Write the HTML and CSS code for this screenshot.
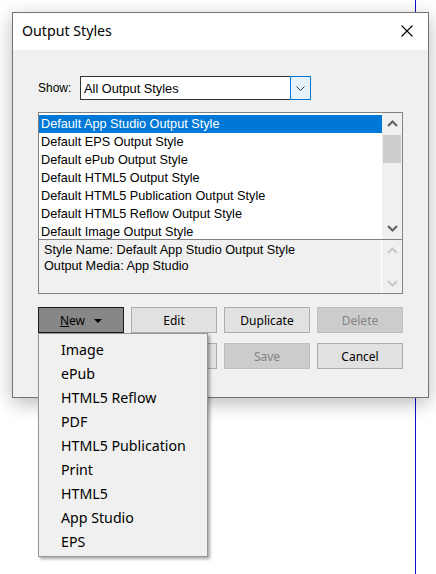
FILE: index.html
```html
<!DOCTYPE html>
<html lang="en">
<head>
    <meta charset="UTF-8">
    <meta name="viewport" content="width=device-width, initial-scale=1.0">
    <title>Output Styles</title>
    <link rel="stylesheet" href="styles.css">
</head>
<body>
    <div class="dialog">
        <div class="titlebar">
            <span class="title">Output Styles</span>
            <svg class="close" width="12" height="12" viewBox="0 0 12 12">
                <path d="M0.5 0.5 L11.5 11.5 M11.5 0.5 L0.5 11.5" stroke="#000" stroke-width="1.1" fill="none"/>
            </svg>
        </div>

        <div class="dialog-body">
            <div class="show-row">
                <span class="show-label">Show:</span>
                <div class="combo">
                    <span class="combo-value">All Output Styles</span>
                    <span class="combo-btn">
                        <svg width="9" height="5" viewBox="0 0 9 5"><polyline points="0.5,0.5 4.5,4.5 8.5,0.5" fill="none" stroke="#333" stroke-width="1"/></svg>
                    </span>
                </div>
            </div>

            <div class="style-box">
                <div class="style-list">
                    <ul class="items">
                        <li class="selected">Default App Studio Output Style</li>
                        <li>Default EPS Output Style</li>
                        <li>Default ePub Output Style</li>
                        <li>Default HTML5 Output Style</li>
                        <li>Default HTML5 Publication Output Style</li>
                        <li>Default HTML5 Reflow Output Style</li>
                        <li>Default Image Output Style</li>
                    </ul>
                    <div class="vscroll">
                        <span class="arrow">
                            <svg width="11" height="7" viewBox="0 0 11 7"><polyline points="1,6 5.5,1.5 10,6" fill="none" stroke="#606060" stroke-width="2"/></svg>
                        </span>
                        <span class="track"><span class="thumb"></span></span>
                        <span class="arrow">
                            <svg width="11" height="7" viewBox="0 0 11 7"><polyline points="1,1 5.5,5.5 10,1" fill="none" stroke="#606060" stroke-width="2"/></svg>
                        </span>
                    </div>
                </div>
                <div class="style-info">
                    <div class="info-text">
                        <p>Style Name: Default App Studio Output Style</p>
                        <p>Output Media: App Studio</p>
                    </div>
                    <div class="vscroll off">
                        <span class="arrow">
                            <svg width="11" height="7" viewBox="0 0 11 7"><polyline points="1,6 5.5,1.5 10,6" fill="none" stroke="#c8c8c8" stroke-width="2"/></svg>
                        </span>
                        <span class="track"></span>
                        <span class="arrow">
                            <svg width="11" height="7" viewBox="0 0 11 7"><polyline points="1,1 5.5,5.5 10,1" fill="none" stroke="#c8c8c8" stroke-width="2"/></svg>
                        </span>
                    </div>
                </div>
            </div>

            <div class="buttons">
                <div class="new-wrap">
                    <button class="btn btn-new"><u>N</u>ew <span class="caret"></span></button>
                    <ul class="menu">
                        <li>Image</li>
                        <li>ePub</li>
                        <li>HTML5 Reflow</li>
                        <li>PDF</li>
                        <li>HTML5 Publication</li>
                        <li>Print</li>
                        <li>HTML5</li>
                        <li>App Studio</li>
                        <li>EPS</li>
                    </ul>
                </div>
                <button class="btn">Edit</button>
                <button class="btn">Duplicate</button>
                <button class="btn" disabled>Delete</button>
                <!-- these two sit under the open menu -->
                <button class="btn"></button>
                <button class="btn"></button>
                <button class="btn" disabled>Save</button>
                <button class="btn">Cancel</button>
            </div>
        </div>
    </div>
</body>
</html>
```

FILE: styles.css
```css
/* Page behind the dialog, with the blue guide line */
body {
    margin: 0;
    min-height: 574px;
    background: #fff linear-gradient(#1010c8, #1010c8) no-repeat 415px 0 / 1px 100%;
    font-family: "Liberation Sans", Arial, sans-serif;
    color: #000;
}

.dialog {
    width: 415px;
    margin: 12px 0 0 12px;
    border: 1px solid #737373;
    background: #f0f0f0;
    box-shadow: 0 5px 18px rgba(0, 0, 0, 0.28);
}

.titlebar {
    height: 37px;
    background: #fff;
    display: flex;
    align-items: center;
    justify-content: space-between;
    padding: 0 15px 0 9px;
}

.title {
    font-family: "Noto Sans", sans-serif;
    font-size: 14.2px;
    margin-top: -2px;
}

.close {
    margin-top: -1px;
}

.dialog-body {
    padding: 26px 25px 28px 25px;
}

/* Show: combo */
.show-row {
    display: flex;
    align-items: center;
}

.show-label {
    font-size: 12px;
    width: 42px;
}

.combo {
    width: 229px;
    height: 22px;
    border: 1px solid #333;
    background: #fff;
    display: flex;
    align-items: center;
}

.combo-value {
    flex: 1;
    padding-left: 3px;
    font-size: 12.8px;
}

.combo-btn {
    width: 19px;
    height: 22px;
    margin-right: -1px;
    border: 1px solid #0078d7;
    background: #e5f1fb;
    display: flex;
    align-items: center;
    justify-content: center;
}

/* List of styles and the info panel below it */
.style-box {
    margin-top: 12px;
    width: 363px;
    border: 1px solid #828282;
}

.style-list {
    display: flex;
    height: 126px;
    background: #fff;
    border-bottom: 1px solid #828282;
}

.items {
    list-style: none;
    margin: 0;
    padding: 2px 0 0 0;
    flex: 1;
    overflow: hidden;
    font-size: 12.7px;
}

.items li {
    height: 18px;
    line-height: 18px;
    padding-left: 2px;
    white-space: nowrap;
}

.items li.selected {
    background: #0078d7;
    color: #fff;
}

.vscroll {
    width: 20px;
    background: #f0f0f0;
    display: flex;
    flex-direction: column;
}

.vscroll .arrow {
    height: 21px;
    display: flex;
    align-items: center;
    justify-content: center;
}

.vscroll .track {
    flex: 1;
    padding: 1px 1px 0 1px;
}

.thumb {
    display: block;
    height: 28px;
    background: #cdcdcd;
}

.style-info {
    display: flex;
    height: 53px;
}

.info-text {
    flex: 1;
    padding: 2px 0 0 5px;
    font-size: 12.7px;
    line-height: 16px;
}

.info-text p {
    margin: 0;
    white-space: nowrap;
}

.vscroll.off {
    border-left: 1px solid #fff;
}

.vscroll.off .arrow {
    height: 20px;
}

/* Button grid */
.buttons {
    margin-top: 13px;
    display: grid;
    grid-template-columns: repeat(4, 86px);
    column-gap: 7px;
    row-gap: 10px;
}

.btn {
    height: 26px;
    border: 1px solid #adadad;
    background: #e1e1e1;
    font-family: "Noto Sans", sans-serif;
    font-size: 12px;
    color: #000;
    padding: 0;
}

.btn:disabled {
    background: #cccccc;
    border-color: #bfbfbf;
    color: #838383;
}

.new-wrap {
    position: relative;
    display: flex;
}

.btn-new {
    width: 88px;
    background: #878787;
    border-color: #1a1a1a;
    z-index: 1;
}

.caret {
    display: inline-block;
    margin-left: 6px;
    vertical-align: 2px;
    border-left: 4px solid transparent;
    border-right: 4px solid transparent;
    border-top: 4px solid #000;
}

/* Drop-down of the New button */
.menu {
    position: absolute;
    top: 26px;
    left: 0;
    z-index: 2;
    width: 168px;
    margin: 0;
    padding: 4px 0 2px 0;
    list-style: none;
    background: #f0f0f0;
    border: 1px solid #979797;
    box-shadow: 2px 2px 3px rgba(0, 0, 0, 0.35);
    font-family: "Noto Sans", sans-serif;
    font-size: 14.2px;
}

.menu li {
    height: 24px;
    line-height: 24px;
    padding-left: 22px;
}
```
